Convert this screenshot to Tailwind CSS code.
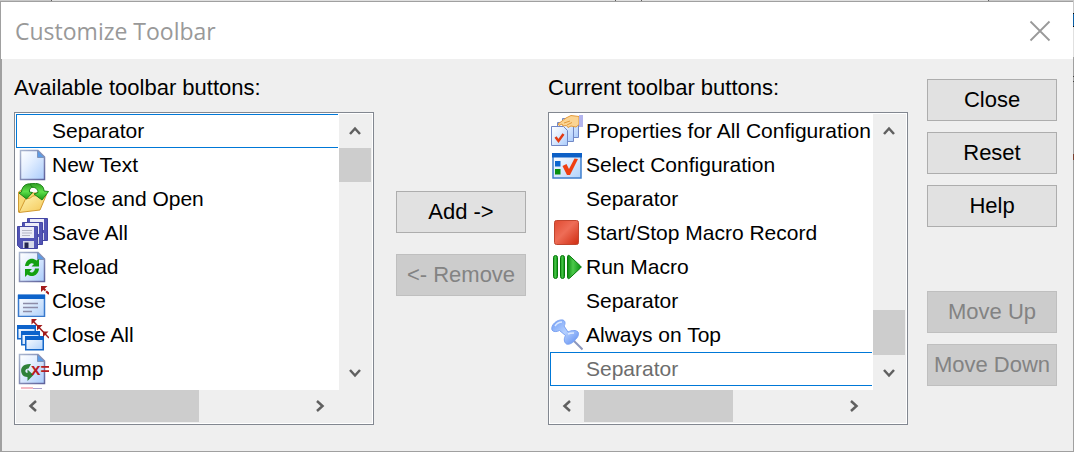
<!DOCTYPE html>
<html lang="en">
<head>
    <meta charset="UTF-8">
    <meta name="viewport" content="width=device-width, initial-scale=1.0">
    <title>Customize Toolbar</title>
    <script src="https://cdn.jsdelivr.net/npm/@tailwindcss/browser@4"></script>
</head>
<body class="min-h-screen flex flex-col bg-[#dcdcdc] font-['Liberation_Sans',Arial,sans-serif] text-black">
    <!-- Edge of the window behind -->
    <div class="flex h-px bg-[#e0e0e0]">
        <div class="w-[51px] bg-[#c8c8c8]"></div>
        <div class="w-px bg-[#606060]"></div>
        <div class="w-[563px]"></div>
        <div class="w-px bg-[#606060]"></div>
        <div class="w-[25px]"></div>
        <div class="w-px bg-[#606060]"></div>
        <div class="flex-1"></div>
        <div class="w-px bg-[#606060]"></div>
        <div class="w-[85px] bg-[#c8c8c8]"></div>
    </div>

    <div class="flex flex-1">
        <main role="dialog" aria-labelledby="title" class="flex flex-1 flex-col border-t border-l border-b border-[#a0a0a0] bg-[#efefef]">
            <header class="flex h-[57px] items-center justify-between bg-white pl-[14px] pr-[22px]">
                <h1 id="title" class="font-['Open_Sans',sans-serif] text-[23px] leading-7 text-[#999999]">Customize Toolbar</h1>
                <button type="button" aria-label="Close window">
                    <svg class="block" width="22" height="22" viewBox="0 0 22 22" fill="none" stroke="#999" stroke-width="1.8"><path d="M1.500 1.500 20.500 20.500M20.500 1.500 1.500 20.500"/></svg>
                </button>
            </header>

            <div class="flex flex-1 border-l border-[#a0a0a0] pl-3 pr-4">
                <!-- Available buttons -->
                <section class="min-w-0 flex-1 pt-4 pb-[25px]">
                    <h2 id="available" class="text-[22px] leading-[26px]">Available toolbar buttons:</h2>
                    <div class="mt-[11px] border border-[#828790] bg-white p-px">
                        <div class="flex h-[276px]">
                            <ul role="listbox" aria-labelledby="available" class="mr-px min-w-0 flex-1 overflow-hidden whitespace-nowrap text-[21px]">
                                <li role="option" class="flex h-[34px] items-center border border-r-0 border-[#0078d7] pl-[35px]">Separator</li>
                                <li role="option" class="flex h-[34px] items-center gap-[3px] pl-px">
                                    <svg class="shrink-0" width="32" height="32" viewBox="0 0 32 32">
                                        <defs>
                                            <linearGradient id="paper" x1="0" y1="0" x2="1" y2="1"><stop offset="0" stop-color="#fff"/><stop offset=".4" stop-color="#e4efff"/><stop offset="1" stop-color="#a9cbfb"/></linearGradient>
                                            <linearGradient id="frame" x1="0" y1="0" x2="1" y2="1"><stop offset="0" stop-color="#a9b6cf"/><stop offset="1" stop-color="#5f629c"/></linearGradient>
                                        </defs>
                                        <path d="M3.500 1.500H21l6.500 6.500v22.500h-24z" fill="url(#paper)" stroke="url(#frame)" stroke-width="1.500"/>
                                        <path d="M20.500 1.500 27.500 8.500h-7z" fill="#5c9be6" stroke="#7f94bb"/>
                                    </svg>
                                    New Text
                                </li>
                                <li role="option" class="flex h-[34px] items-center gap-[3px] pl-px">
                                    <svg class="shrink-0" width="32" height="32" viewBox="0 0 32 32">
                                        <defs>
                                            <linearGradient id="folder" x1="0" y1="0" x2="1" y2="1"><stop offset="0" stop-color="#fff6b8"/><stop offset="1" stop-color="#f3c653"/></linearGradient>
                                            <linearGradient id="green" x1="0" y1="0" x2="0" y2="1"><stop offset="0" stop-color="#2f9d22"/><stop offset=".5" stop-color="#5ee04a"/><stop offset="1" stop-color="#1b9a16"/></linearGradient>
                                        </defs>
                                        <path d="M1.500 29V9l3-2h5l3 3h12v8z" fill="#f7d976" stroke="#cf9c35"/>
                                        <path d="M2 29.500 8.500 16l5-1 2-2 14-1.500L23 27z" fill="url(#folder)" stroke="#d29a30"/>
                                        <path d="M17 2C11-1 5 2 4.500 9l-2.500 1 7.500 6 6-6.500-3-.5C12 6 14 4 17 4z" fill="url(#green)" stroke="#1c8317"/>
                                        <path d="M13 1c8-2 14 1 14 7l4.500.5L25 17l-8-6 4-1.500c0-3-2-5-6-5.500z" fill="url(#green)" stroke="#1c8317"/>
                                    </svg>
                                    Close and Open
                                </li>
                                <li role="option" class="flex h-[34px] items-center gap-[3px] pl-px">
                                    <svg class="shrink-0" width="32" height="32" viewBox="0 0 32 32">
                                        <defs>
                                            <g id="floppy">
                                                <path d="M.5.5h20v22h-17l-3-3z" fill="#5254b5" stroke="#4547a4"/>
                                                <path d="M3 1h14v11H3z" fill="#ececf7"/>
                                                <path d="M5 4.500h10M5 7h10M5 9.500h8" stroke="#b5b5c4"/>
                                                <path d="M6 15h11v7H6z" fill="#d6d9e9"/>
                                                <path d="M7.500 16.500h4V22h-4z" fill="#24264f"/>
                                            </g>
                                        </defs>
                                        <use href="#floppy" x="10" y="1"/>
                                        <use href="#floppy" x="5" y="5"/>
                                        <use href="#floppy" x="0" y="9"/>
                                    </svg>
                                    Save All
                                </li>
                                <li role="option" class="flex h-[34px] items-center gap-[3px] pl-px">
                                    <svg class="shrink-0" width="32" height="32" viewBox="0 0 32 32">
                                        <path d="M2.500 1.500H21l6.500 6.500v22.500h-25z" fill="url(#paper)" stroke="url(#frame)" stroke-width="1.500"/>
                                        <path d="M20.500 1.500 27.500 8.500h-7z" fill="#5c9be6" stroke="#7f94bb"/>
                                        <path d="M8 15C9 8 15 6 19.500 9.500L22 8v7.500h-7.500l2.500-2.500c-2.500-2-5 0-5.500 2z" fill="#13a012"/>
                                        <path d="M22 17.500c-.5 7-7 9.500-11.500 6L8 26v-8h7l-2.500 2.500c2.500 2 5 .5 5.500-3z" fill="#13a012"/>
                                    </svg>
                                    Reload
                                </li>
                                <li role="option" class="flex h-[34px] items-center gap-[3px] pl-px">
                                    <svg class="shrink-0" width="32" height="32" viewBox="0 0 32 32">
                                        <defs>
                                            <linearGradient id="pane" x1="0" y1="0" x2="1" y2="1"><stop offset="0" stop-color="#fff"/><stop offset="1" stop-color="#b1d2fb"/></linearGradient>
                                        </defs>
                                        <path d="M1.500 10.500h26v21h-26z" fill="url(#pane)" stroke="#3879cc" stroke-width="1.500"/>
                                        <path d="M1 9.500h27V14H1z" fill="#0d63cb"/>
                                        <path d="M6 18.500h15M6 22.500h15M6 26.500h9" stroke="#8c8ca8" stroke-width="1.500"/>
                                        <path d="m32 9-6.500-6.500" stroke="#a31b1b" stroke-width="2" stroke-dasharray="4 1"/>
                                        <path d="M24 1h6.500L24 7z" fill="#a31b1b"/>
                                    </svg>
                                    Close
                                </li>
                                <li role="option" class="flex h-[34px] items-center gap-[3px] pl-px">
                                    <svg class="shrink-0" width="32" height="32" viewBox="0 0 32 32">
                                        <defs>
                                            <g id="pane-small">
                                                <path d="M.75.75h17.500v13H.75z" fill="url(#pane)" stroke="#1668c9" stroke-width="1.500"/>
                                                <path d="M0 0h19v4H0z" fill="#0d63cb"/>
                                            </g>
                                        </defs>
                                        <use href="#pane-small" x="0" y="6"/>
                                        <use href="#pane-small" x="4" y="12"/>
                                        <use href="#pane-small" x="8" y="17"/>
                                        <path d="m16 2 16 17" stroke="#a31b1b" stroke-width="1.500"/>
                                        <path d="M14.500 0H20l-5.500 5.500zM20 6h5.500L20 11.500zM26 12.500h5.500L26 18z" fill="#a31b1b"/>
                                    </svg>
                                    Close All
                                </li>
                                <li role="option" class="flex h-[34px] items-center gap-[3px] pl-px">
                                    <svg class="shrink-0" width="32" height="32" viewBox="0 0 32 32">
                                        <path d="M2.500 1.500H21l6.500 6.500v22.500h-25z" fill="url(#paper)" stroke="url(#frame)" stroke-width="1.500"/>
                                        <path d="M20.500 1.500 27.500 8.500h-7z" fill="#5c9be6" stroke="#7f94bb"/>
                                        <path d="M14 11C6 10.500 3 15 4.500 20c1 3 3.500 4 6 4v4l6-6-6-5.500V20c-3-.5-3-4 1-4.500z" fill="#2f8139"/>
                                        <text x="14" y="22" font-family="Liberation Sans" font-size="17" font-weight="bold" fill="#b81c24">x=</text>
                                    </svg>
                                    Jump
                                </li>
                                <li role="option" aria-label="Next item" class="flex h-[34px] items-center pl-px">
                                    <svg class="shrink-0" width="32" height="32" viewBox="0 0 32 32">
                                        <path d="M4 0h12v2H4z" fill="#f3b9c2"/>
                                        <path d="M16 1h9v1h-9z" fill="#a9a0cc"/>
                                    </svg>
                                </li>
                            </ul>
                            <div class="flex w-[33px] flex-col bg-[#efefef] pr-px">
                                <button type="button" aria-label="Scroll up" class="flex h-[34px] items-center justify-center">
                                    <svg width="12" height="12" viewBox="0 0 12 12" fill="none" stroke="#606060" stroke-width="2.500"><path d="m1 9 5-5.500L11 9"/></svg>
                                </button>
                                <div class="h-[34px] bg-[#cdcdcd]"></div>
                                <div class="flex-1"></div>
                                <button type="button" aria-label="Scroll down" class="flex h-[35px] items-center justify-center">
                                    <svg width="12" height="12" viewBox="0 0 12 12" fill="none" stroke="#606060" stroke-width="2.500"><path d="m1 3 5 5.500L11 3"/></svg>
                                </button>
                            </div>
                        </div>
                        <div class="flex h-[33px] bg-[#efefef] pr-[35px] pb-px">
                            <button type="button" aria-label="Scroll left" class="flex w-[34px] items-center justify-center">
                                <svg width="12" height="12" viewBox="0 0 12 12" fill="none" stroke="#606060" stroke-width="2.500"><path d="M9 1 3.500 6 9 11"/></svg>
                            </button>
                            <div class="w-[149px] bg-[#cdcdcd]"></div>
                            <div class="flex-1"></div>
                            <button type="button" aria-label="Scroll right" class="flex w-[34px] items-center justify-center">
                                <svg width="12" height="12" viewBox="0 0 12 12" fill="none" stroke="#606060" stroke-width="2.500"><path d="M3 1 8.500 6 3 11"/></svg>
                            </button>
                        </div>
                    </div>
                </section>

                <div class="mx-[22px] flex w-[130px] flex-col gap-[21px] pt-[132px] text-[22px]">
                    <button type="button" class="h-[42px] border border-[#adadad] bg-[#e1e1e1] pb-0.5">Add -&gt;</button>
                    <button type="button" disabled class="h-[42px] border border-[#bfbfbf] bg-[#cccccc] pb-0.5 text-[#838383]">&lt;- Remove</button>
                </div>

                <!-- Current buttons -->
                <section class="min-w-0 flex-1 pt-4 pb-[25px]">
                    <h2 id="current" class="text-[22px] leading-[26px]">Current toolbar buttons:</h2>
                    <div class="mt-[11px] border border-[#828790] bg-white p-px">
                        <div class="flex h-[276px]">
                            <ul role="listbox" aria-labelledby="current" class="mr-px min-w-0 flex-1 overflow-hidden whitespace-nowrap text-[21px]">
                                <li role="option" class="flex h-[34px] items-center gap-[3px] pl-px">
                                    <svg class="shrink-0" width="32" height="32" viewBox="0 0 32 32">
                                        <defs>
                                            <path id="sheet" d="M.5.5h12l4 4v15H.5z" fill="url(#paper)" stroke="#7188c6"/>
                                        </defs>
                                        <use href="#sheet" x="11" y="3"/>
                                        <use href="#sheet" x="6" y="7"/>
                                        <use href="#sheet" x="0" y="11"/>
                                        <path d="m4.500 22 3 4 5-7" fill="none" stroke="#e23a12" stroke-width="2.500"/>
                                        <path d="m7 9 8-6 5-2.500 8 1v8L25 12l-5-1-3 1.500-1.500-2L12 11l-1-2-3 1.500z" fill="#fbd493" stroke="#e39a3c"/>
                                        <path d="m13 8 6-2M16 10l5-2.500" stroke="#e39a3c"/>
                                        <path d="M28 0h4v12h-4z" fill="#b3b4ee"/>
                                    </svg>
                                    Properties for All Configuration
                                </li>
                                <li role="option" class="flex h-[34px] items-center gap-[3px] pl-px">
                                    <svg class="shrink-0" width="32" height="32" viewBox="0 0 32 32">
                                        <path d="M2 5h28v24H2z" fill="url(#pane)" stroke="#3f7fcd" stroke-width="1.500"/>
                                        <path d="M1 4h30v4.500H1z" fill="#0c5fc6"/>
                                        <path d="M4 12h5.500v5.500H4z" fill="#0a66cf"/>
                                        <path d="M4 20h5.500v5.500H4z" fill="#089010"/>
                                        <path d="m11.500 17 4-2 2.500 5L23.500 9.500 27 10l-8 16h-3z" fill="#ef3f12"/>
                                    </svg>
                                    Select Configuration
                                </li>
                                <li role="option" class="flex h-[34px] items-center pl-9">Separator</li>
                                <li role="option" class="flex h-[34px] items-center gap-[3px] pl-px">
                                    <svg class="shrink-0" width="32" height="32" viewBox="0 0 32 32">
                                        <defs>
                                            <linearGradient id="red" x1="0" y1="0" x2="1" y2="1"><stop offset="0" stop-color="#e04a30"/><stop offset=".45" stop-color="#ee6d57"/><stop offset="1" stop-color="#cf2c10"/></linearGradient>
                                        </defs>
                                        <rect x="3.500" y="3.500" width="24" height="24" rx="2" fill="url(#red)" stroke="#c0462f"/>
                                    </svg>
                                    Start/Stop Macro Record
                                </li>
                                <li role="option" class="flex h-[34px] items-center gap-[3px] pl-px">
                                    <svg class="shrink-0" width="32" height="32" viewBox="0 0 32 32">
                                        <defs>
                                            <linearGradient id="play" x1="0" y1="0" x2="1" y2="0"><stop offset="0" stop-color="#0b8a10"/><stop offset=".4" stop-color="#4cc94a"/><stop offset="1" stop-color="#089010"/></linearGradient>
                                        </defs>
                                        <g fill="url(#play)" stroke="#087a0c">
                                            <rect x="2.500" y="4.500" width="4" height="23" rx="2"/>
                                            <rect x="9.500" y="4.500" width="4" height="23" rx="2"/>
                                            <path d="M16.500 5.500c0-1 1-1.500 2-.8L29.500 15c.8.600.8 1.400 0 2l-11 10.300c-1 .7-2 .2-2-.8z"/>
                                        </g>
                                    </svg>
                                    Run Macro
                                </li>
                                <li role="option" class="flex h-[34px] items-center pl-9">Separator</li>
                                <li role="option" class="flex h-[34px] items-center gap-[3px] pl-px">
                                    <svg class="shrink-0" width="32" height="32" viewBox="0 0 32 32">
                                        <defs>
                                            <linearGradient id="pin" x1="0" y1="0" x2="1" y2="1"><stop offset="0" stop-color="#6f9cf5"/><stop offset=".5" stop-color="#b5d0ff"/><stop offset="1" stop-color="#5d8cf0"/></linearGradient>
                                        </defs>
                                        <path d="m22 21 9.500 9.500" stroke="#8b97bd" stroke-width="2"/>
                                        <path d="M1 11C-.5 6 6 0 12 1c2.500 1 2.500 4 1 6l4 6c4-2 8-2 10 0 1.500 3-1 6-2.500 7.500-2 3-6 5.500-9 4.500-3-2-2.500-6-1-8.500L8.500 11.500C6 13 2 13 1 11z" fill="url(#pin)" stroke="#7ba2f2"/>
                                        <path d="M4 7c2-3 4-4 7-4M17 15c2-1 5-1 6-1" stroke="#dce9ff" stroke-width="1.500" fill="none"/>
                                    </svg>
                                    Always on Top
                                </li>
                                <li role="option" aria-disabled="true" class="flex h-[34px] items-center border border-r-0 border-[#0078d7] pl-[35px] text-[#6d6d6d]">Separator</li>
                            </ul>
                            <div class="flex w-[33px] flex-col bg-[#efefef] pr-px">
                                <button type="button" aria-label="Scroll up" class="flex h-[34px] items-center justify-center">
                                    <svg width="12" height="12" viewBox="0 0 12 12" fill="none" stroke="#606060" stroke-width="2.500"><path d="m1 9 5-5.500L11 9"/></svg>
                                </button>
                                <div class="flex-1"></div>
                                <div class="h-[45px] bg-[#cdcdcd]"></div>
                                <button type="button" aria-label="Scroll down" class="flex h-[35px] items-center justify-center">
                                    <svg width="12" height="12" viewBox="0 0 12 12" fill="none" stroke="#606060" stroke-width="2.500"><path d="m1 3 5 5.500L11 3"/></svg>
                                </button>
                            </div>
                        </div>
                        <div class="flex h-[33px] bg-[#efefef] pr-[35px] pb-px">
                            <button type="button" aria-label="Scroll left" class="flex w-[34px] items-center justify-center">
                                <svg width="12" height="12" viewBox="0 0 12 12" fill="none" stroke="#606060" stroke-width="2.500"><path d="M9 1 3.500 6 9 11"/></svg>
                            </button>
                            <div class="w-[149px] bg-[#cdcdcd]"></div>
                            <div class="flex-1"></div>
                            <button type="button" aria-label="Scroll right" class="flex w-[34px] items-center justify-center">
                                <svg width="12" height="12" viewBox="0 0 12 12" fill="none" stroke="#606060" stroke-width="2.500"><path d="M3 1 8.500 6 3 11"/></svg>
                            </button>
                        </div>
                    </div>
                </section>

                <div class="ml-[19px] flex w-[130px] flex-col gap-[11px] pt-5 text-[22px]">
                    <button type="button" class="h-[42px] border border-[#adadad] bg-[#e1e1e1] pb-0.5">Close</button>
                    <button type="button" class="h-[42px] border border-[#adadad] bg-[#e1e1e1] pb-0.5">Reset</button>
                    <button type="button" class="h-[42px] border border-[#adadad] bg-[#e1e1e1] pb-0.5">Help</button>
                    <button type="button" disabled class="mt-[53px] h-[42px] border border-[#bfbfbf] bg-[#cccccc] pb-0.5 text-[#838383]">Move Up</button>
                    <button type="button" disabled class="h-[42px] border border-[#bfbfbf] bg-[#cccccc] pb-0.5 text-[#838383]">Move Down</button>
                </div>
            </div>
        </main>

        <!-- Sliver of the window behind, right of the dialog -->
        <div class="flex w-px flex-col bg-[#a0a0a0]">
            <div class="h-3 bg-[#c8c8c8]"></div>
            <div class="h-px bg-black"></div>
            <div class="h-3 bg-[#0b5fa5]"></div>
            <div class="h-px bg-black"></div>
            <div class="h-[30px] bg-[#e0e0e0]"></div>
            <div class="h-[19px]"></div>
            <div class="h-px bg-[#404040]"></div>
            <div class="h-1"></div>
            <div class="h-px bg-[#404040]"></div>
            <div class="h-[72px]"></div>
            <div class="h-[6px] bg-[#7a4030]"></div>
        </div>
    </div>
</body>
</html>
